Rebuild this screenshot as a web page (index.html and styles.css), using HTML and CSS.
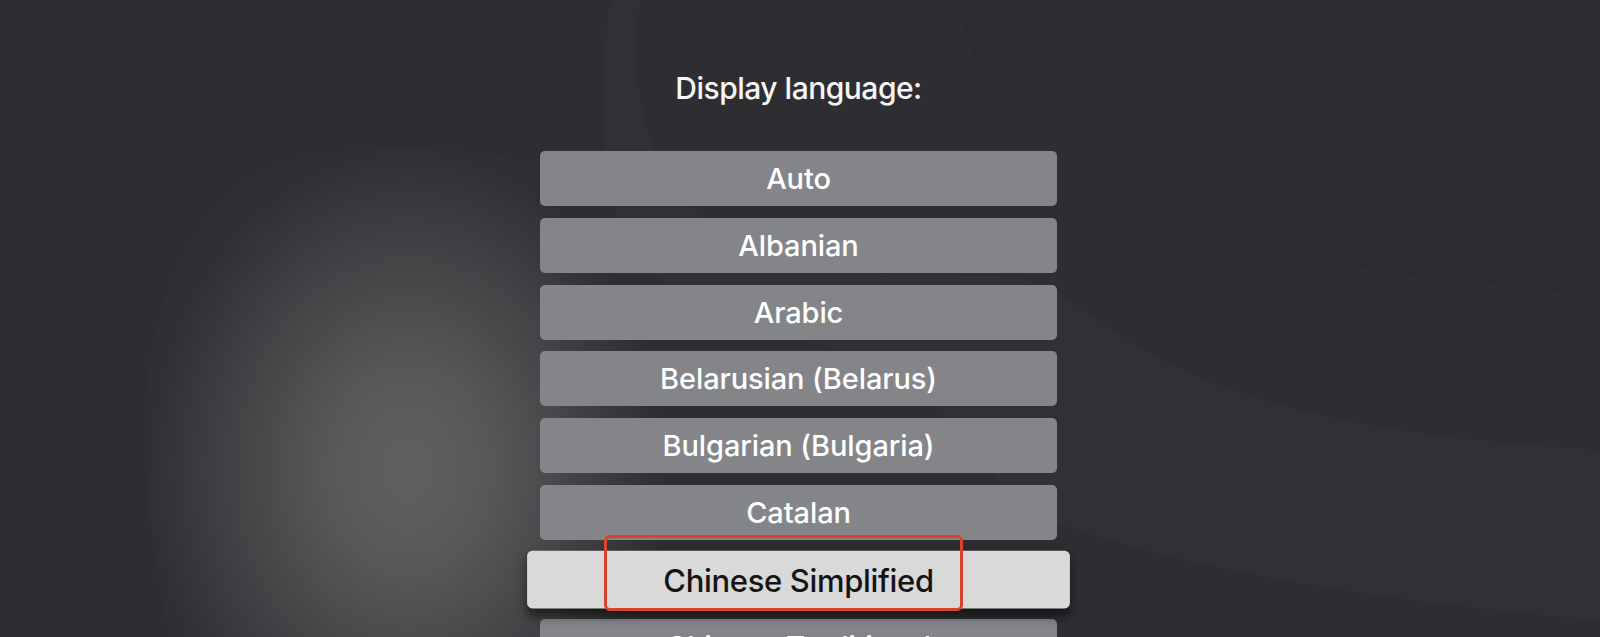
FILE: index.html
```html
<!DOCTYPE html>
<html lang="en">
<head>
  <meta charset="UTF-8" />
  <title>Display language</title>
  <link rel="stylesheet" href="styles.css">
</head>
<body>
  <svg class="fondo" width="1600" height="637" viewBox="0 0 1600 637">
    <path d="M640 0 C 625 120, 660 210, 760 250 C 900 300, 1010 250, 1070 300 C 1150 360, 1250 430, 1600 450 L 1600 620 C 1350 600, 1150 560, 1050 520 C 980 480, 960 420, 900 380 C 800 320, 700 330, 630 250 C 600 200, 600 80, 610 0 Z" class="onda" />
    <path d="M960 0 C 960 60, 1000 110, 1100 140 C 1200 170, 1260 240, 1330 260 C 1420 285, 1520 280, 1600 300 L 1600 0 Z" class="onda-oscura" />
    <path d="M260 170 C 140 250, 120 420, 170 637 L 560 637 L 560 170 C 460 140, 340 140, 260 170 Z" class="onda tenue" />
  </svg>

  <main class="pantalla">
    <h1 class="titulo">Display language:</h1>

    <div class="lista">
      <div class="opcion">Auto</div>
      <div class="opcion">Albanian</div>
      <div class="opcion">Arabic</div>
      <div class="opcion">Belarusian (Belarus)</div>
      <div class="opcion">Bulgarian (Bulgaria)</div>
      <div class="opcion">Catalan</div>
      <div class="opcion activa"><span>Chinese Simplified</span></div>
      <div class="opcion">Chinese Traditional</div>
      <div class="marca"></div>
    </div>
  </main>
</body>
</html>
```

FILE: styles.css
```css
body {
  margin: 0;
  width: 1600px;
  height: 637px;
  overflow: hidden;
  position: relative;
  font-family: 'Inter', 'Liberation Sans', sans-serif;
  color: #f4f4f4;
  background:
    radial-gradient(ellipse 260px 320px at 408px 470px, #5f5f5f 0%, #59595a 25%, #48484b 55%, rgba(47, 47, 51, 0) 100%),
    #2e2e32;
}

.fondo {
  position: absolute;
  top: 0;
  left: 0;
  z-index: 0;
}

.onda {
  fill: rgba(255, 255, 255, 0.016);
}

.onda.tenue {
  fill: rgba(255, 255, 255, 0.01);
}

.onda-oscura {
  fill: rgba(0, 0, 0, 0.035);
}

.pantalla {
  position: relative;
  z-index: 1;
  display: flex;
  flex-direction: column;
  align-items: center;
  padding-top: 68px;
  padding-right: 3px;
}

.titulo {
  margin: 0;
  font-size: 30px;
  font-weight: 500;
  line-height: 40px;
  letter-spacing: -0.5px;
  color: #f6f6f6;
}

.lista {
  position: relative;
  width: 517px;
  margin-top: 43px;
  display: flex;
  flex-direction: column;
  gap: 11.8px;
}

.opcion {
  height: 55px;
  border-radius: 5px;
  background: #848589;
  display: flex;
  align-items: center;
  justify-content: center;
  font-size: 29px;
  font-weight: 500;
  letter-spacing: -0.1px;
  color: #ffffff;
  flex-shrink: 0;
}

.opcion.activa {
  position: relative;
  z-index: 2;
  transform: scale(1.05);
  background: #d9d9d9;
  color: #141414;
  box-shadow: 0 7px 10px rgba(0, 0, 0, 0.55);
}

.opcion.activa span {
  font-size: 29.5px;
  letter-spacing: -0.3px;
}

.marca {
  position: absolute;
  left: 64px;
  top: 384px;
  width: 353px;
  height: 70px;
  border: 3px solid #d8432c;
  border-radius: 6px;
  z-index: 3;
}
```
